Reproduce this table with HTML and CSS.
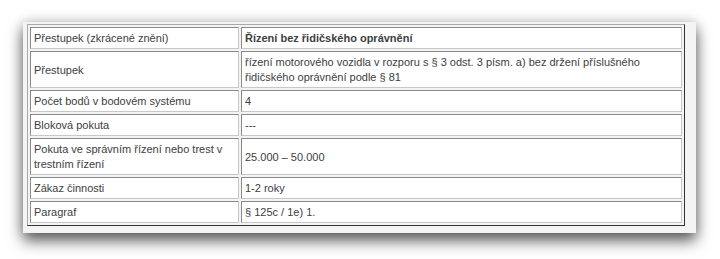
FILE: index.html
```html
<!DOCTYPE html>
<html lang="cs">
<head>
<meta charset="utf-8">
<title>Řízení bez řidičského oprávnění</title>
<link rel="stylesheet" href="styles.css">
</head>
<body>
<div class="page">
<div class="panel">
  <table class="offence">
    <tr>
      <td class="label">Přestupek (zkrácené znění)</td>
      <td class="value head">Řízení bez řidičského oprávnění</td>
    </tr>
    <tr>
      <td class="label">Přestupek</td>
      <td class="value">řízení motorového vozidla v rozporu s § 3 odst. 3 písm. a) bez držení příslušného řidičského oprávnění podle § 81</td>
    </tr>
    <tr>
      <td class="label">Počet bodů v bodovém systému</td>
      <td class="value">4</td>
    </tr>
    <tr>
      <td class="label">Bloková pokuta</td>
      <td class="value">---</td>
    </tr>
    <tr>
      <td class="label">Pokuta ve správním řízení nebo trest v trestním řízení</td>
      <td class="value">25.000 – 50.000</td>
    </tr>
    <tr>
      <td class="label">Zákaz činnosti</td>
      <td class="value">1-2 roky</td>
    </tr>
    <tr>
      <td class="label">Paragraf</td>
      <td class="value">§ 125c / 1e) 1.</td>
    </tr>
  </table>
</div>
</div>
</body>
</html>
```
FILE: styles.css
```css
html, body {
  margin: 0;
  background: #ffffff;
}

body {
  font-family: "Liberation Sans", Arial, sans-serif;
  font-size: 11px;
  color: #404040;
}

.page {
  min-height: 259px;
  padding: 22px 0 0 23px;
  box-sizing: border-box;
}

.panel {
  width: 658px;
  padding: 2px 11px 7px 4px;
  background: #f4f4f4;
  box-shadow: 0 8px 14px rgba(0, 0, 0, 0.6), 0 0 12px rgba(0, 0, 0, 0.2);
}

.offence {
  width: 658px;
  border-collapse: separate;
  border-spacing: 2px;
  border: 1px solid;
  border-color: #a8a8a8 #333333 #333333 #a8a8a8;
  background: #f4f4f4;
}

.offence td {
  background: #ffffff;
  border: 1px solid;
  border-color: #8a8a8a #c8c8c8 #c8c8c8 #8a8a8a;
  padding: 3px 4px 2px 3px;
  line-height: 15px;
  vertical-align: middle;
  text-align: left;
}

.offence .label {
  width: 200px;
}

.offence .head {
  font-weight: bold;
}
```
